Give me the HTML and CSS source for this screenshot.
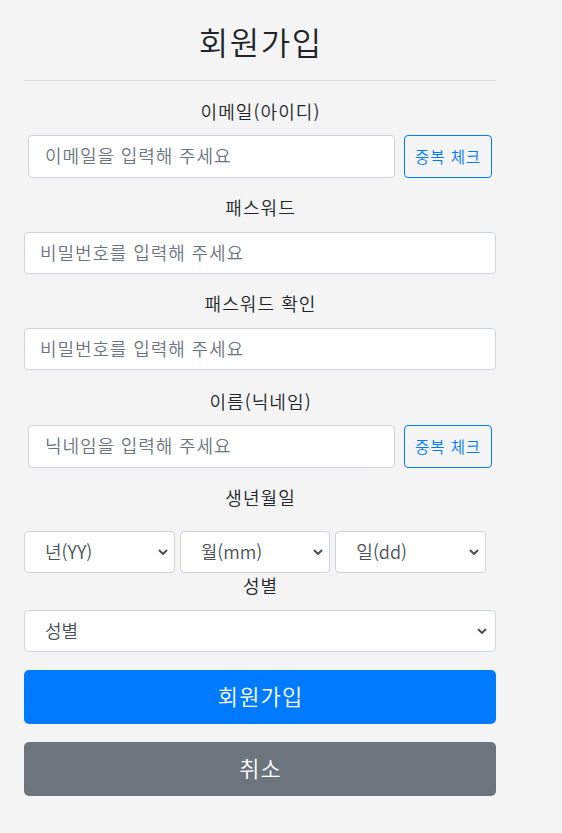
FILE: index.html
```html
<!DOCTYPE html>
<html lang="ko">
<head>
<meta charset="utf-8">
<title>회원가입</title>
<link rel="stylesheet" href="styles.css">
</head>
<body>
<div class="wrap">
  <h1 class="title">회원가입</h1>
  <hr class="divider">
  <form class="form">
    <div class="group g-email">
      <label class="label">이메일(아이디)</label>
      <div class="row">
        <input class="input" type="email" placeholder="이메일을 입력해 주세요">
        <button type="button" class="btn-check">중복 체크</button>
      </div>
    </div>
    <div class="group g-pw">
      <label class="label">패스워드</label>
      <input class="input input-full" type="password" placeholder="비밀번호를 입력해 주세요">
    </div>
    <div class="group g-pw2">
      <label class="label">패스워드 확인</label>
      <input class="input input-full" type="password" placeholder="비밀번호를 입력해 주세요">
    </div>
    <div class="group g-name">
      <label class="label">이름(닉네임)</label>
      <div class="row">
        <input class="input" type="text" placeholder="닉네임을 입력해 주세요">
        <button type="button" class="btn-check">중복 체크</button>
      </div>
    </div>
    <div class="group g-birth">
      <label class="label">생년월일</label>
      <div class="birth">
        <div class="select-wrap">
          <select class="select"><option>년(YY)</option></select>
          <svg class="chev" width="10" height="6" viewBox="0 0 10 6"><path d="M1 1l4 4 4-4" fill="none" stroke="#4a4f55" stroke-width="2"/></svg>
        </div>
        <div class="select-wrap">
          <select class="select"><option>월(mm)</option></select>
          <svg class="chev" width="10" height="6" viewBox="0 0 10 6"><path d="M1 1l4 4 4-4" fill="none" stroke="#4a4f55" stroke-width="2"/></svg>
        </div>
        <div class="select-wrap">
          <select class="select"><option>일(dd)</option></select>
          <svg class="chev" width="10" height="6" viewBox="0 0 10 6"><path d="M1 1l4 4 4-4" fill="none" stroke="#4a4f55" stroke-width="2"/></svg>
        </div>
      </div>
    </div>
    <div class="group g-gender">
      <label class="label">성별</label>
      <div class="select-wrap">
        <select class="select select-full"><option>성별</option></select>
        <svg class="chev chev-full" width="10" height="6" viewBox="0 0 10 6"><path d="M1 1l4 4 4-4" fill="none" stroke="#4a4f55" stroke-width="2"/></svg>
      </div>
    </div>
    <button type="submit" class="btn btn-primary">회원가입</button>
    <button type="button" class="btn btn-secondary">취소</button>
  </form>
</div>
</body>
</html>
```

FILE: styles.css
```css
* { box-sizing: border-box; }
html, body {
  margin: 0;
  background: #f4f4f4;
}
body {
  font-family: "Noto Sans CJK KR", "Noto Sans", sans-serif;
  font-weight: 350;
  color: #212529;
  width: 562px;
  height: 833px;
}
.wrap {
  width: 472px;
  margin-left: 24px;
  display: flex;
  flex-direction: column;
}
.title {
  margin: 22px 0 0;
  font-size: 32px;
  font-weight: 350;
  line-height: 38px;
  letter-spacing: 0.05em;
  text-indent: 0.05em;
  text-align: center;
  color: #212529;
}
.divider {
  margin: 20px 0 0;
  border: 0;
  border-top: 1px solid #dcdcdc;
  height: 0;
}
.form {
  display: flex;
  flex-direction: column;
  margin-top: 18px;
}
.group {
  display: flex;
  flex-direction: column;
}
.label {
  display: block;
  text-align: center;
  font-size: 18px;
  line-height: 25px;
  height: 27px;
  padding-bottom: 2px;
  letter-spacing: 0.06em;
  text-indent: 0.06em;
  color: #212529;
}
.g-email .label, .g-name .label { margin-bottom: 9px; }
.g-pw .label, .g-pw2 .label, .g-gender .label { margin-bottom: 10px; }
.g-birth .label { margin-bottom: 19px; }
.g-email { margin-bottom: 17px; }
.g-pw { margin-bottom: 17px; }
.g-pw2 { margin-bottom: 19px; }
.g-name { margin-bottom: 17px; }
.g-birth { margin-bottom: 0; }
.g-gender { margin-bottom: 18px; }

.row {
  display: flex;
  gap: 9px;
  padding: 0 4px;
}
.input {
  height: 43px;
  flex: 1;
  min-width: 0;
  background: #fff;
  border: 1px solid #ced4da;
  border-radius: 4px;
  padding: 0 16px 3px;
  font-family: inherit;
  font-weight: 350;
  font-size: 18px;
  letter-spacing: 0.05em;
  color: #495057;
  outline: none;
}
.input::placeholder { color: #6c757d; }
.input-full {
  height: 42px;
  flex: none;
  width: 100%;
  padding: 0 15px 3px;
}
.btn-check {
  width: 88px;
  height: 43px;
  flex: none;
  background: transparent;
  border: 1px solid #007bff;
  border-radius: 4px;
  color: #007bff;
  font-family: inherit;
  font-weight: 350;
  font-size: 15.5px;
  letter-spacing: 0.06em;
  padding: 0 0 2px;
}
.birth {
  display: grid;
  grid-template-columns: 1fr 1fr 1fr;
  gap: 5px;
  width: 462px;
}
.select-wrap {
  position: relative;
}
.select {
  display: block;
  height: 42px;
  width: 100%;
  -webkit-appearance: none;
  appearance: none;
  background: #fff;
  border: 1px solid #ced4da;
  border-radius: 4px;
  padding: 0 24px 3px 20px;
  font-family: inherit;
  font-weight: 350;
  font-size: 18px;
  color: #495057;
  outline: none;
}
.chev {
  position: absolute;
  right: 7px;
  top: 18px;
  pointer-events: none;
}
.chev-full { right: 9px; }
.btn {
  width: 100%;
  height: 54px;
  border: 0;
  border-radius: 5px;
  color: #fff;
  font-family: inherit;
  font-weight: 350;
  font-size: 22px;
  letter-spacing: 0.05em;
  text-indent: 0.05em;
  padding: 0 0 4px;
}
.btn-primary { background: #007bff; margin-bottom: 18px; }
.btn-secondary { background: #6c757d; }
```
